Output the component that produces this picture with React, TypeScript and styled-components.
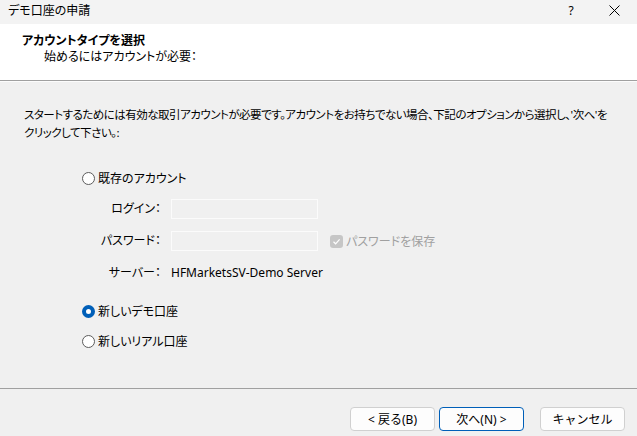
import { createGlobalStyle, styled } from "styled-components";

const GlobalStyle = createGlobalStyle`
  html, body {
    margin: 0;
    padding: 0;
    background: #f0f0f0;
  }
  body {
    font-family: "Noto Sans", "Noto Sans CJK JP", sans-serif;
    font-size: 12px;
    color: #000;
    font-feature-settings: "palt";
  }
`;

const Window = styled.div`
  width: 637px;
  height: 436px;
  display: flex;
  flex-direction: column;
  background: #f0f0f0;
  overflow: hidden;
`;

const TitleBar = styled.div`
  height: 24px;
  display: flex;
  align-items: center;
  padding-left: 8px;
  background: #f3f3f3;
`;

const Title = styled.div`
  flex: 1;
  font-size: 12px;
  line-height: 20px;
  margin-top: -3px;
`;

const TitleButton = styled.div<{ $width: number }>`
  width: ${(p) => p.$width}px;
  height: 24px;
  display: flex;
  align-items: center;
  justify-content: center;
  font-size: 12px;
  margin-top: -3px;
`;

const Header = styled.div`
  height: 57px;
  box-sizing: border-box;
  background: #fff;
  padding: 9px 0 0 22px;
  border-bottom: 1px solid #a0a0a0;
  box-shadow: 0 1px 0 #fcfcfc;
`;

const HeaderTitle = styled.div`
  font-weight: bold;
  line-height: 16px;
`;

const HeaderSub = styled.div`
  padding-left: 22px;
  line-height: 16px;
`;

const Body = styled.div`
  flex: 1;
  padding: 25px 24px 0;
  display: flex;
  flex-direction: column;
`;

const Intro = styled.p`
  margin: 0;
  font-size: 11.5px;
  letter-spacing: -0.5px;
  line-height: 18px;
  white-space: nowrap;
`;

const Options = styled.div`
  padding-left: 58px;
  display: flex;
  flex-direction: column;
`;

const RadioRow = styled.label<{ $top: number }>`
  display: flex;
  align-items: center;
  gap: 3px;
  height: 20px;
  margin-top: ${(p) => p.$top}px;
`;

const RadioCircle = styled.span<{ $checked?: boolean }>`
  box-sizing: border-box;
  width: 13px;
  height: 13px;
  border-radius: 50%;
  border: ${(p) => (p.$checked ? "4px solid #005fb8" : "1px solid #5c5c5c")};
  background: #fff;
`;

const FieldGrid = styled.div`
  display: grid;
  grid-template-columns: 79px 147px auto;
  column-gap: 10px;
  row-gap: 12px;
  margin-top: 11px;
  align-items: center;
`;

const FieldLabel = styled.div`
  text-align: right;
  line-height: 20px;
  height: 20px;
`;

const FieldInput = styled.div`
  height: 20px;
  box-sizing: border-box;
  border: 1px solid #fbfbfb;
  background: #f0f0f0;
`;

const FieldValue = styled.div`
  line-height: 20px;
  white-space: nowrap;
`;

const SaveCheck = styled.div`
  display: flex;
  align-items: center;
  gap: 3px;
  color: #a0a0a0;
  margin-left: 2px;
  white-space: nowrap;
`;

const CheckBox = styled.span`
  width: 13px;
  height: 13px;
  border-radius: 3px;
  background: #c6c6c6;
  display: flex;
  align-items: center;
  justify-content: center;
`;

const Footer = styled.div`
  height: 48px;
  box-sizing: border-box;
  border-top: 1px solid #a0a0a0;
  display: flex;
  justify-content: flex-end;
  align-items: flex-start;
  padding: 18px 12px 0 0;
`;

const Button = styled.button<{ $primary?: boolean; $gap: number }>`
  width: 85px;
  height: 24px;
  margin-left: ${(p) => p.$gap}px;
  box-sizing: border-box;
  border-radius: 4px;
  border: 1px solid ${(p) => (p.$primary ? "#005fb8" : "#d0d0d0")};
  background: #fdfdfd;
  font-family: inherit;
  font-size: 12px;
  color: #000;
  padding: 0;
`;

export default function App() {
  return (
    <Window>
      <GlobalStyle />
      <TitleBar>
        <Title>デモ口座の申請</Title>
        <TitleButton $width={40}>?</TitleButton>
        <TitleButton $width={46}>
          <svg width="11" height="11" viewBox="0 0 11 11">
            <path d="M0.5 0.5 L10.5 10.5 M10.5 0.5 L0.5 10.5" stroke="#000" strokeWidth="1" />
          </svg>
        </TitleButton>
      </TitleBar>
      <Header>
        <HeaderTitle>アカウントタイプを選択</HeaderTitle>
        <HeaderSub>始めるにはアカウントが必要：</HeaderSub>
      </Header>
      <Body>
        <Intro>
          スタートするためには有効な取引アカウントが必要です。アカウントをお持ちでない場合、下記のオプションから選択し、'次へ'を
          <br />
          クリックして下さい。:
        </Intro>
        <Options>
          <RadioRow $top={26}>
            <RadioCircle />
            既存のアカウント
          </RadioRow>
          <FieldGrid>
            <FieldLabel>ログイン：</FieldLabel>
            <FieldInput />
            <div />
            <FieldLabel>パスワード：</FieldLabel>
            <FieldInput />
            <SaveCheck>
              <CheckBox>
                <svg width="9" height="9" viewBox="0 0 9 9">
                  <path d="M1.5 4.8 L3.6 6.8 L7.6 2.4" fill="none" stroke="#fff" strokeWidth="1.2" />
                </svg>
              </CheckBox>
              パスワードを保存
            </SaveCheck>
            <FieldLabel>サーバー：</FieldLabel>
            <FieldValue>HFMarketsSV-Demo Server</FieldValue>
            <div />
          </FieldGrid>
          <RadioRow $top={18}>
            <RadioCircle $checked />
            新しいデモ口座
          </RadioRow>
          <RadioRow $top={10}>
            <RadioCircle />
            新しいリアル口座
          </RadioRow>
        </Options>
      </Body>
      <Footer>
        <Button $gap={0}>&lt; 戻る(B)</Button>
        <Button $gap={4} $primary>
          次へ(N) &gt;
        </Button>
        <Button $gap={16}>キャンセル</Button>
      </Footer>
    </Window>
  );
}
